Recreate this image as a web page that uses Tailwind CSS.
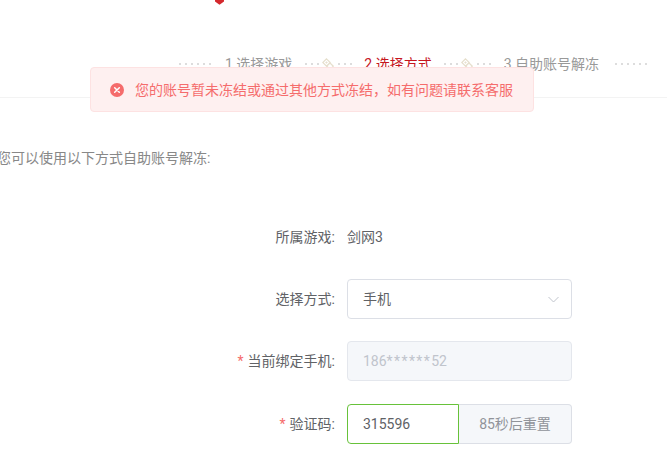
<!DOCTYPE html>
<html lang="zh">
<head>
<meta charset="utf-8">
<script src="https://cdn.jsdelivr.net/npm/@tailwindcss/browser@4"></script>
</head>
<body class="bg-white">
<div class="relative w-[667px] h-[454px] overflow-hidden bg-white text-[14px] text-[#606266] font-['Roboto','Noto_Sans_CJK_SC',sans-serif]">
  <!-- top marker -->
  <svg class="absolute left-[214px] top-0" width="11" height="5" viewBox="0 0 11 5"><path d="M1 0h9v1.500L5.500 4.800 1 1.500z" fill="#d4282d"/></svg>

  <!-- steps header -->
  <header class="h-[98px] border-b border-[#f3f3f3] pl-[179px] pt-[54px]">
    <div class="flex items-center h-[20px] leading-[20px] whitespace-nowrap">
      <span class="w-[34px] h-[2px] bg-[repeating-linear-gradient(90deg,#ddd_0,#ddd_2px,transparent_2px,transparent_6px)]"></span>
      <span class="ml-[12px] text-[#999]">1 选择游戏</span>
      <span class="ml-[13px] w-[15px] h-[2px] bg-[repeating-linear-gradient(90deg,#ddd_0,#ddd_2px,transparent_2px,transparent_6px)]"></span>
      <svg class="ml-[2px] mr-[4px]" width="12" height="12" viewBox="0 0 12 12" fill="none" stroke="#e6dfcd" stroke-width="1.200"><path d="M4.500.8l3.700 3.700-3.700 3.700L.8 4.500zM8 5l3.300 3.200L8 11.400 4.800 8.200z"/><path d="M4.500 3.200l1.300 1.300-1.300 1.300-1.300-1.300z" fill="#e6dfcd" stroke="none"/></svg>
      <span class="w-[15px] h-[2px] bg-[repeating-linear-gradient(90deg,#ddd_0,#ddd_2px,transparent_2px,transparent_6px)]"></span>
      <span class="ml-[11px] text-[#c6161e]">2 选择方式</span>
      <span class="ml-[12px] w-[15px] h-[2px] bg-[repeating-linear-gradient(90deg,#ddd_0,#ddd_2px,transparent_2px,transparent_6px)]"></span>
      <svg class="ml-[2px] mr-[4px]" width="12" height="12" viewBox="0 0 12 12" fill="none" stroke="#e6dfcd" stroke-width="1.200"><path d="M4.500.8l3.700 3.700-3.700 3.700L.8 4.500zM8 5l3.300 3.200L8 11.400 4.800 8.200z"/><path d="M4.500 3.200l1.300 1.300-1.300 1.300-1.300-1.300z" fill="#e6dfcd" stroke="none"/></svg>
      <span class="w-[15px] h-[2px] bg-[repeating-linear-gradient(90deg,#ddd_0,#ddd_2px,transparent_2px,transparent_6px)]"></span>
      <span class="ml-[12px] text-[#999]">3 自助账号解冻</span>
      <span class="ml-[16px] w-[34px] h-[2px] bg-[repeating-linear-gradient(90deg,#ddd_0,#ddd_2px,transparent_2px,transparent_6px)]"></span>
    </div>
  </header>

  <!-- floating message -->
  <div class="absolute left-[90px] top-[67px] w-[444px] h-[45px] flex items-center pl-[19px] bg-[#fef0f0] border border-[#fde2e2] rounded-[4px] text-[#f56c6c] whitespace-nowrap">
    <svg class="shrink-0" width="14" height="14" viewBox="0 0 14 14"><circle cx="7" cy="7" r="7" fill="#f56c6c"/><path d="M4.700 4.700l4.600 4.600M9.300 4.700l-4.600 4.600" stroke="#fff" stroke-width="1.500" stroke-linecap="round"/></svg>
    <span class="ml-[11px] leading-[20px]">您的账号暂未冻结或通过其他方式冻结，如有问题请联系客服</span>
  </div>

  <p class="mt-[50px] ml-[-3px] leading-[20px] text-[#888] whitespace-nowrap">您可以使用以下方式自助账号解冻:</p>

  <!-- form -->
  <form class="mt-[49px] flex flex-col">
    <div class="flex items-center h-[40px] mb-[22px]">
      <label class="w-[335px] text-right">所属游戏:</label>
      <span class="ml-[12px]">剑网3</span>
    </div>
    <div class="flex items-center h-[40px] mb-[22px]">
      <label class="w-[335px] text-right">选择方式:</label>
      <div class="ml-[12px] w-[225px] h-[40px] flex items-center justify-between pl-[15px] pr-[12px] border border-[#dcdfe6] rounded-[4px] bg-white">
        <span>手机</span>
        <svg width="11" height="7" viewBox="0 0 11 7" fill="none" stroke="#c0c4cc" stroke-width="1"><path d="M.5 1l5 5 5-5"/></svg>
      </div>
    </div>
    <div class="flex items-center h-[40px] mb-[23px]">
      <label class="w-[335px] text-right"><span class="text-[#f56c6c] mr-[4px]">*</span>当前绑定手机:</label>
      <div class="ml-[12px] w-[225px] h-[40px] flex items-center pl-[15px] border border-[#e4e7ed] rounded-[4px] bg-[#f5f7fa] text-[#c0c4cc]"><span>186<span class="tracking-[1.400px]">******</span>52</span></div>
    </div>
    <div class="flex items-center h-[40px]">
      <label class="w-[335px] text-right"><span class="text-[#f56c6c] mr-[4px]">*</span>验证码:</label>
      <div class="ml-[12px] w-[225px] h-[40px] flex">
        <div class="w-[112px] flex items-center pl-[15px] border border-[#67c23a] rounded-l-[4px] bg-white">315596</div>
        <div class="flex-1 flex items-center justify-center border border-l-0 border-[#dcdfe6] rounded-r-[4px] bg-[#f5f7fa] text-[#909399]">85秒后重置</div>
      </div>
    </div>
  </form>
</div>
</body>
</html>
